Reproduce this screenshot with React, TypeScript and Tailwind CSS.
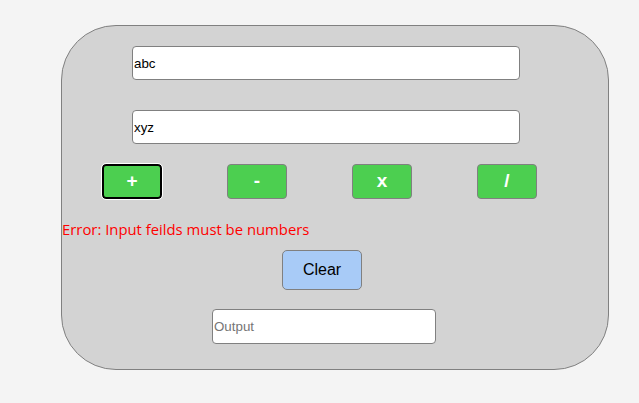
import React from "react";

export default function App() {
  const btn =
    "w-[60px] h-[35px] rounded-[4px] bg-[#4ccf50] border border-[#808080] text-white font-bold text-[19px] flex items-center justify-center";
  return (
    <div className="w-[639px] h-[403px] bg-[#f4f4f4] pt-[25px] pl-[61px]" style={{ fontFamily: '"Liberation Sans", Arial, sans-serif' }}>
      <div className="w-[548px] h-[345px] bg-[#d3d3d3] border border-[#808080] rounded-[55px] flex flex-col">
        <input
          defaultValue="abc"
          className="ml-[70px] mt-[20px] w-[388px] h-[34px] bg-white border border-[#808080] rounded-[4px] px-[1px] text-[13.33px] text-black outline-none"
        />
        <input
          defaultValue="xyz"
          className="ml-[70px] mt-[30px] w-[388px] h-[34px] bg-white border border-[#808080] rounded-[4px] px-[1px] text-[13.33px] text-black outline-none"
        />
        <div className="flex ml-[40px] mt-[20px] gap-[65px]">
          <button className={btn + " border-2 border-black outline outline-1 outline-white"}>+</button>
          <button className={btn}>-</button>
          <button className={btn}>x</button>
          <button className={btn}>/</button>
        </div>
        <div
          className="mt-[20px] h-[20px] text-[14.85px] leading-[20px] text-[#ff0000]"
          style={{ fontFamily: '"Open Sans", "Noto Sans", sans-serif' }}
        >
          Error: Input feilds must be numbers
        </div>
        <button className="ml-[220px] mt-[11px] w-[80px] h-[40px] bg-[#a8cbf7] border border-[#808080] rounded-[5px] text-[16px] text-black">
          Clear
        </button>
        <input
          placeholder="Output"
          className="ml-[150px] mt-[19px] w-[224px] h-[35px] bg-white border border-[#808080] rounded-[4px] px-[1px] text-[13.33px] text-black placeholder:text-[#757575] outline-none"
        />
      </div>
    </div>
  );
}
